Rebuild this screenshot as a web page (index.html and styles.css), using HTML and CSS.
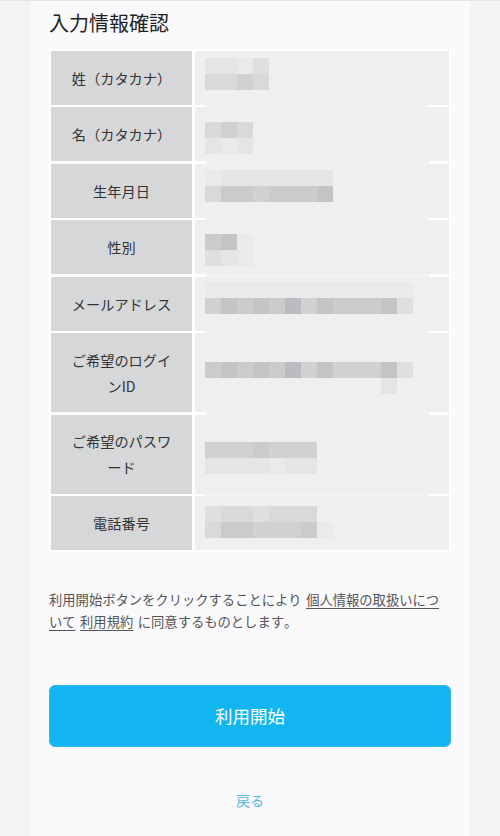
FILE: index.html
```html
<!DOCTYPE html>
<html lang="ja">
<head>
<meta charset="utf-8">
<title>入力情報確認</title>
<link rel="stylesheet" href="styles.css">
</head>
<body>
<main class="card">
  <h1 class="title">入力情報確認</h1>
  <div class="info">
    <div class="row">
      <div class="label">姓（カタカナ）</div>
      <div class="val"><div class="mos">
        <div class="mrow"><span class="k1"></span><span class="k1"></span><span class="k0"></span><span class="k2"></span></div>
        <div class="mrow"><span class="k3"></span><span class="k3"></span><span class="k4"></span><span class="k3"></span></div>
      </div></div>
    </div>
    <div class="row">
      <div class="label">名（カタカナ）</div>
      <div class="val"><div class="mos">
        <div class="mrow"><span class="k3"></span><span class="k4"></span><span class="k3"></span></div>
        <div class="mrow"><span class="k1"></span><span class="k0"></span><span class="k1"></span></div>
      </div></div>
    </div>
    <div class="row">
      <div class="label">生年月日</div>
      <div class="val"><div class="mos">
        <div class="mrow"><span class="k0"></span><span class="k1"></span><span class="k1"></span><span class="k1"></span><span class="k1"></span><span class="k1"></span><span class="k1"></span><span class="k1"></span></div>
        <div class="mrow"><span class="k3"></span><span class="k5"></span><span class="k5"></span><span class="k4"></span><span class="k5"></span><span class="k5"></span><span class="k5"></span><span class="k6"></span></div>
      </div></div>
    </div>
    <div class="row">
      <div class="label">性別</div>
      <div class="val"><div class="mos">
        <div class="mrow"><span class="k5"></span><span class="k6"></span><span class="k0"></span></div>
        <div class="mrow"><span class="k2"></span><span class="k1"></span><span class="k0"></span></div>
      </div></div>
    </div>
    <div class="row">
      <div class="label">メールアドレス</div>
      <div class="val"><div class="mos">
        <div class="mrow"><span class="k0"></span><span class="k0"></span><span class="k0"></span><span class="k0"></span><span class="k0"></span><span class="k0"></span><span class="k0"></span><span class="k0"></span><span class="k0"></span><span class="k0"></span><span class="k0"></span><span class="k0"></span><span class="k0"></span></div>
        <div class="mrow"><span class="k4"></span><span class="k6"></span><span class="k5"></span><span class="k6"></span><span class="k5"></span><span class="k7"></span><span class="k4"></span><span class="k6"></span><span class="k5"></span><span class="k5"></span><span class="k5"></span><span class="k6"></span><span class="k2"></span></div>
      </div></div>
    </div>
    <div class="row">
      <div class="label">ご希望のログインID</div>
      <div class="val"><div class="mos">
        <div class="mrow"><span class="k5"></span><span class="k6"></span><span class="k5"></span><span class="k6"></span><span class="k5"></span><span class="k7"></span><span class="k4"></span><span class="k6"></span><span class="k4"></span><span class="k4"></span><span class="k4"></span><span class="k6"></span><span class="k2"></span></div>
        <div class="mrow"><span></span><span></span><span></span><span></span><span></span><span></span><span></span><span></span><span></span><span></span><span></span><span class="k1"></span></div>
      </div></div>
    </div>
    <div class="row">
      <div class="label">ご希望のパスワード</div>
      <div class="val"><div class="mos">
        <div class="mrow"><span class="k4"></span><span class="k4"></span><span class="k4"></span><span class="k5"></span><span class="k4"></span><span class="k4"></span><span class="k4"></span></div>
        <div class="mrow"><span class="k1"></span><span class="k1"></span><span class="k1"></span><span class="k1"></span><span class="k0"></span><span class="k1"></span><span class="k1"></span></div>
      </div></div>
    </div>
    <div class="row">
      <div class="label">電話番号</div>
      <div class="val"><div class="mos">
        <div class="mrow"><span class="k2"></span><span class="k3"></span><span class="k3"></span><span class="k2"></span><span class="k3"></span><span class="k3"></span><span class="k3"></span></div>
        <div class="mrow"><span class="k3"></span><span class="k5"></span><span class="k5"></span><span class="k4"></span><span class="k4"></span><span class="k4"></span><span class="k5"></span><span class="k0"></span></div>
      </div></div>
    </div>
  </div>
  <p class="consent">利用開始ボタンをクリックすることにより <a href="#">個人情報の取扱いについて</a> <a href="#">利用規約</a> に同意するものとします。</p>
  <button class="start" type="button">利用開始</button>
  <a class="back" href="#">戻る</a>
</main>
</body>
</html>
```
FILE: styles.css
```css
html, body {
  margin: 0;
  padding: 0;
}
body {
  background: #f3f4f6;
  border-top: 1px solid #e4e5e8;
  font-family: "Noto Sans CJK JP", sans-serif;
  font-kerning: none;
  color: #333;
}
.card {
  width: 438px;
  margin: 0 31px;
  box-sizing: border-box;
  min-height: calc(100vh - 1px);
  background: #fafafc;
  padding: 7px 18px 20px;
  display: flex;
  flex-direction: column;
}
.title {
  margin: 0;
  font-size: 20px;
  line-height: 30px;
  font-weight: 400;
  color: #222;
}
.info {
  margin-top: 11px;
  background: #fff;
  padding: 2px;
  display: flex;
  flex-direction: column;
  gap: 2.45px;
}
.row {
  display: grid;
  grid-template-columns: 141px 1fr;
  column-gap: 3px;
}
.label {
  background: #d6d7d9;
  min-height: 54px;
  box-sizing: border-box;
  padding: 13.5px 16px;
  display: flex;
  align-items: center;
  justify-content: center;
  text-align: center;
  font-size: 14.2px;
  line-height: 26px;
  color: #333;
}
.val {
  position: relative;
  background: #eeeff1;
  padding-left: 10px;
}
.row:not(:last-child) .val::after {
  content: "";
  position: absolute;
  left: 10px;
  right: 20px;
  bottom: -2.45px;
  height: 2.45px;
  background: #f1f2f4;
}
.mos {
  display: flex;
  flex-direction: column;
}
.mrow {
  display: flex;
  height: 16px;
}
.mrow span {
  width: 16px;
  height: 16px;
  flex: none;
}
.row:nth-child(1) .mos { margin-top: 7px; }
.row:nth-child(2) .mos { margin-top: 14.5px; }
.row:nth-child(3) .mos { margin-top: 6px; }
.row:nth-child(4) .mos { margin-top: 13.5px; }
.row:nth-child(5) .mos { margin-top: 5px; }
.row:nth-child(6) .mos { margin-top: 29px; }
.row:nth-child(7) .mos { margin-top: 27px; }
.row:nth-child(8) .mos { margin-top: 10px; }
.k0 { background: #e9eaec; }
.k1 { background: #e4e5e7; }
.k2 { background: #dedfe1; }
.k3 { background: #d8d9db; }
.k4 { background: #d0d1d3; }
.k5 { background: #cacbcd; }
.k6 { background: #c3c4c6; }
.k7 { background: #bbbcbf; }
.consent {
  margin: 37px 0 0;
  font-size: 13.3px;
  line-height: 21.7px;
  word-spacing: 1.5px;
  color: #555;
}
.consent a {
  color: #555;
  text-decoration: underline;
  text-underline-offset: 3px;
}
.start {
  margin-top: 53px;
  height: 62px;
  width: 100%;
  border: 1px solid #2cbcf1;
  border-radius: 6px;
  background: #12b5f0;
  color: #fff;
  font-family: inherit;
  font-size: 17.5px;
  line-height: 26px;
  padding: 0;
}
.back {
  margin-top: 43px;
  align-self: center;
  font-size: 14px;
  line-height: 20px;
  color: #5bb7de;
  text-decoration: none;
}
```
